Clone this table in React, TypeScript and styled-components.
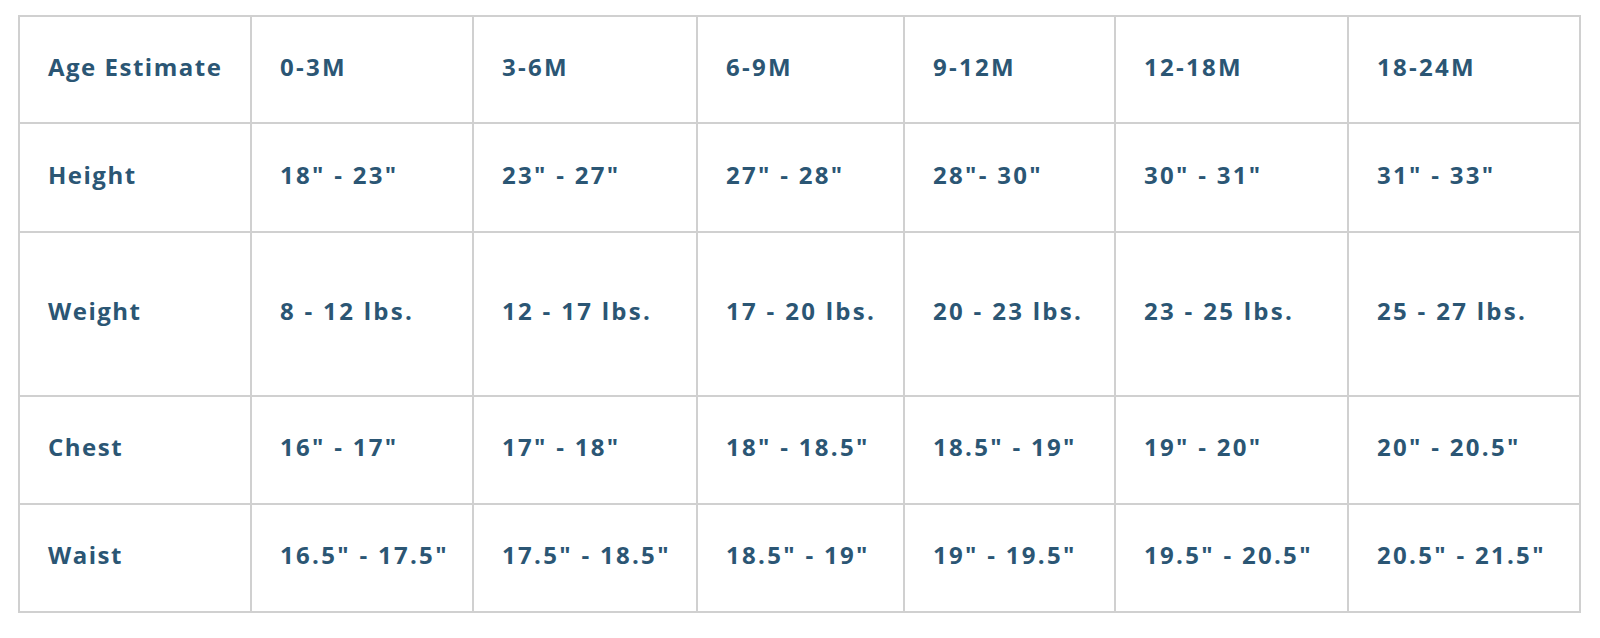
import React from "react";
import styled, { css, createGlobalStyle } from "styled-components";

const Global = createGlobalStyle`
  html, body { margin: 0; padding: 0; background: #ffffff; }
  body { font-family: "Open Sans", "Liberation Sans", sans-serif; }
`;

const Page = styled.div`
  padding: 15px 21px 0 18px;
`;

const Table = styled.table`
  border-collapse: collapse;
  table-layout: fixed;
  width: 1561px;
  border: 2px solid #d0d0d0;
`;

const Row = styled.tr<{ $h: number }>`
  height: ${(p) => p.$h}px;
`;

const cellBase = css`
  border: 2px solid #d0d0d0;
  padding: 0 0 6px 28px;
  vertical-align: middle;
  text-align: left;
  color: #2b5674;
  font-family: "Open Sans", "Liberation Sans", sans-serif;
  font-weight: 700;
  font-size: 24px;
  line-height: 1;
  white-space: nowrap;
`;

const Label = styled.th`
  ${cellBase};
  letter-spacing: 1.5px;
`;

const Value = styled.td`
  ${cellBase};
  letter-spacing: 2.3px;
`;

const widths = [232, 222, 224, 207, 211, 233, 232];

const rows: { h: number; label: string; cells: string[] }[] = [
  { h: 107, label: "Age Estimate", cells: ["0-3M", "3-6M", "6-9M", "9-12M", "12-18M", "18-24M"] },
  { h: 109, label: "Height", cells: ['18" - 23"', '23" - 27"', '27" - 28"', '28"- 30"', '30" - 31"', '31" - 33"'] },
  { h: 164, label: "Weight", cells: ["8 - 12 lbs.", "12 - 17 lbs.", "17 - 20 lbs.", "20 - 23 lbs.", "23 - 25 lbs.", "25 - 27 lbs."] },
  { h: 108, label: "Chest", cells: ['16" - 17"', '17" - 18"', '18" - 18.5"', '18.5" - 19"', '19" - 20"', '20" - 20.5"'] },
  { h: 108, label: "Waist", cells: ['16.5" - 17.5"', '17.5" - 18.5"', '18.5" - 19"', '19" - 19.5"', '19.5" - 20.5"', '20.5" - 21.5"'] },
];

export default function App() {
  return (
    <Page>
      <Global />
      <Table>
        <colgroup>
          {widths.map((w, i) => (
            <col key={i} style={{ width: w }} />
          ))}
        </colgroup>
        <tbody>
          {rows.map((r, i) => (
            <Row key={i} $h={r.h}>
              <Label scope="row">{r.label}</Label>
              {r.cells.map((c, j) => (
                <Value key={j}>{c}</Value>
              ))}
            </Row>
          ))}
        </tbody>
      </Table>
    </Page>
  );
}
